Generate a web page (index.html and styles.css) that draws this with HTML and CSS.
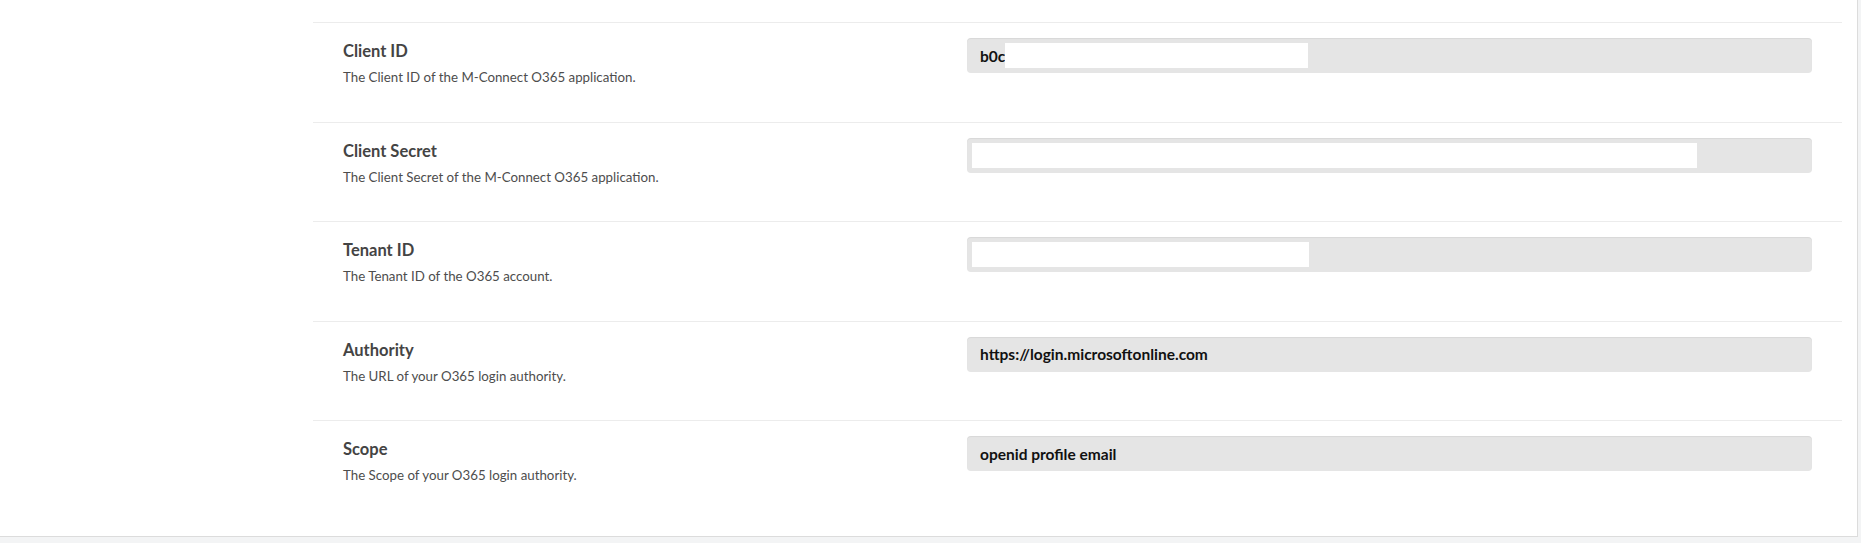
FILE: index.html
```html
<!DOCTYPE html>
<html>
<head>
<meta charset="utf-8">
<link rel="stylesheet" href="styles.css">
</head>
<body>
<div class="page">
  <div class="panel">
    <div class="top-gap"></div>
    <div class="settings">
      <div class="row">
        <div class="label">
          <div class="title">Client ID</div>
          <div class="desc">The Client ID of the M-Connect O365 application.</div>
        </div>
        <div class="field">
          <div class="input"><span class="value value-short">b0c</span><span class="redact redact-client"></span></div>
        </div>
      </div>
      <div class="row">
        <div class="label">
          <div class="title">Client Secret</div>
          <div class="desc">The Client Secret of the M-Connect O365 application.</div>
        </div>
        <div class="field">
          <div class="input input-redacted"><span class="redact redact-secret"></span></div>
        </div>
      </div>
      <div class="row">
        <div class="label">
          <div class="title">Tenant ID</div>
          <div class="desc">The Tenant ID of the O365 account.</div>
        </div>
        <div class="field">
          <div class="input input-redacted"><span class="redact redact-tenant"></span></div>
        </div>
      </div>
      <div class="row">
        <div class="label">
          <div class="title">Authority</div>
          <div class="desc">The URL of your O365 login authority.</div>
        </div>
        <div class="field">
          <div class="input"><span class="value">https://login.microsoftonline.com</span></div>
        </div>
      </div>
      <div class="row row-last">
        <div class="label">
          <div class="title">Scope</div>
          <div class="desc">The Scope of your O365 login authority.</div>
        </div>
        <div class="field">
          <div class="input"><span class="value">openid profile email</span></div>
        </div>
      </div>
    </div>
  </div>
</div>
</body>
</html>
```

FILE: styles.css
```css
html, body {
  margin: 0;
  padding: 0;
  background: #f3f4f5;
}
.page {
  width: 1861px;
  height: 543px;
  background: #f3f4f5;
  overflow: hidden;
}
.panel {
  width: 1858px;
  height: 537px;
  box-sizing: border-box;
  background: #ffffff;
  border-right: 1px solid #dcdcdc;
  border-bottom: 1px solid #dcdcdc;
}
.top-gap {
  height: 22px;
}
.settings {
  margin-left: 313px;
  width: 1529px;
}
.row {
  display: flex;
  border-top: 1px solid #ececec;
  height: 99.5px;
  box-sizing: border-box;
  padding-top: 15px;
}
.label {
  width: 624px;
  padding-left: 30px;
  padding-top: 2px;
}
.title {
  font-family: Lato, "Noto Sans", sans-serif;
  font-weight: 700;
  font-size: 16.5px;
  line-height: 22px;
  color: #444444;
}
.desc {
  font-family: Lato, "Noto Sans", sans-serif;
  font-size: 13.3px;
  line-height: 18px;
  margin-top: 6px;
  color: #4d4d4d;
}
.field {
  width: 845px;
}
.input {
  height: 35px;
  box-sizing: border-box;
  background: #e5e5e5;
  border-radius: 4px;
  box-shadow: inset 0 1px 1px rgba(0,0,0,0.06);
  display: flex;
  align-items: center;
  padding-left: 13px;
}
.input-redacted {
  padding-left: 5px;
}
.value {
  font-family: Lato, "Noto Sans", sans-serif;
  font-weight: 700;
  font-size: 15.5px;
  color: #111111;
  white-space: nowrap;
}
.value-short {
  width: 25px;
  overflow: hidden;
}
.redact {
  display: block;
  background: #ffffff;
  height: 25px;
}
.redact-client {
  width: 303px;
}
.redact-secret {
  width: 725px;
}
.redact-tenant {
  width: 337px;
}
```
